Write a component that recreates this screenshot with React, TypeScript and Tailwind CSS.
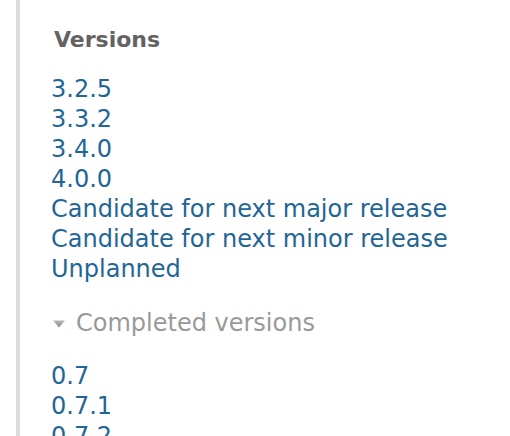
import React from "react";

const active = [
  "3.2.5",
  "3.3.2",
  "3.4.0",
  "4.0.0",
  "Candidate for next major release",
  "Candidate for next minor release",
  "Unplanned",
];

const completed = ["0.7", "0.7.1", "0.7.2", "0.7.3"];

export default function App() {
  return (
    <div className="w-[510px] h-[436px] overflow-hidden bg-white flex" style={{ fontFamily: '"DejaVu Sans", Verdana, sans-serif' }}>
      <div className="w-4 shrink-0" />
      <div className="w-1 shrink-0 bg-[#dcdcdc]" />
      <div className="flex-1 pl-[31px] pt-[25px]">
        <h2 className="ml-[3px] text-[22px] leading-[30px] font-bold text-[#626262]">Versions</h2>
        <ul className="mt-[19px]">
          {active.map((v) => (
            <li key={v} className="text-[24px] leading-[30px] text-[#1f6696]">
              <a href="#">{v}</a>
            </li>
          ))}
        </ul>
        <div className="mt-[24px] flex items-center h-[30px] text-[24px] leading-[30px] text-[#999999]">
          <svg width="12" height="8" viewBox="0 0 12 8" className="mr-[11px] ml-[2px] mt-[1px]">
            <defs>
              <linearGradient id="tri" x1="0" y1="0" x2="0" y2="1">
                <stop offset="0" stopColor="#b8b8b8" />
                <stop offset="1" stopColor="#8c8c8c" />
              </linearGradient>
            </defs>
            <path d="M0 0.5 L12 0.5 L6 7.5 Z" fill="url(#tri)" />
          </svg>
          <span>Completed versions</span>
        </div>
        <ul className="mt-[23px]">
          {completed.map((v) => (
            <li key={v} className="text-[24px] leading-[30px] text-[#1f6696]">
              <a href="#">{v}</a>
            </li>
          ))}
        </ul>
      </div>
    </div>
  );
}
